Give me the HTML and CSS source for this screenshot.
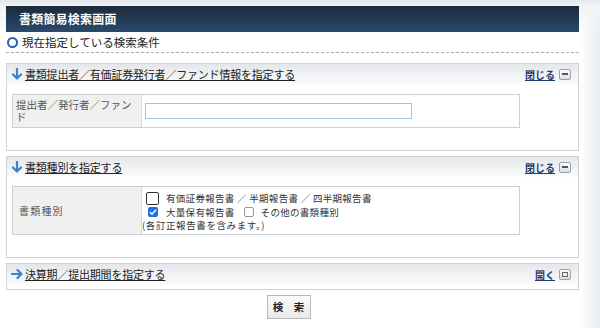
FILE: index.html
```html
<!DOCTYPE html>
<html lang="ja">
<head>
<meta charset="utf-8">
<title>書類簡易検索画面</title>
<link rel="stylesheet" href="styles.css">
</head>
<body>
<div class="page">
  <div class="titlebar">書類簡易検索画面</div>
  <div class="cond"><span class="ring"></span><span>現在指定している検索条件</span></div>

  <div class="box">
    <div class="bhead">
      <a class="hlink" href="#"><svg class="arr" width="12" height="12" viewBox="0 0 12 12"><path d="M6 1v9M2 6.5l4 4 4-4" fill="none" stroke="#3b82d0" stroke-width="2.2" stroke-linecap="round" stroke-linejoin="round"/></svg><span class="ul">書類提出者／有価証券発行者／ファンド情報を指定する</span></a>
      <span class="tog"><a class="tlink" href="#">閉じる</a><span class="tbtn"><span class="minus"></span></span></span>
    </div>
    <div class="bbody">
      <div class="tbl">
        <div class="lab lab1">提出者／発行者／ファンド</div>
        <div class="val val1"><span class="inp"></span></div>
      </div>
    </div>
  </div>

  <div class="box">
    <div class="bhead">
      <a class="hlink" href="#"><svg class="arr" width="12" height="12" viewBox="0 0 12 12"><path d="M6 1v9M2 6.5l4 4 4-4" fill="none" stroke="#3b82d0" stroke-width="2.2" stroke-linecap="round" stroke-linejoin="round"/></svg><span class="ul">書類種別を指定する</span></a>
      <span class="tog"><a class="tlink" href="#">閉じる</a><span class="tbtn"><span class="minus"></span></span></span>
    </div>
    <div class="bbody b2">
      <div class="tbl tbl2">
        <div class="lab lab2">書類種別</div>
        <div class="val val2">
          <div class="crow"><span class="cb big"></span><span class="ct">有価証券報告書 ／ 半期報告書 ／ 四半期報告書</span></div>
          <div class="crow"><span class="cb on"><svg width="10" height="10" viewBox="0 0 10 10"><path d="M2 5.2l2 2 4-4.4" fill="none" stroke="#fff" stroke-width="1.6"/></svg></span><span class="ct">大量保有報告書</span><span class="cb off"></span><span class="ct">その他の書類種別</span></div>
          <div class="note">(各訂正報告書を含みます。)</div>
        </div>
      </div>
    </div>
  </div>

  <div class="box">
    <div class="bhead">
      <a class="hlink" href="#"><svg class="arr" width="12" height="12" viewBox="0 0 12 12"><path d="M1 6h9M6.5 2l4 4-4 4" fill="none" stroke="#3b82d0" stroke-width="2.2" stroke-linecap="round" stroke-linejoin="round"/></svg><span class="ul">決算期／提出期間を指定する</span></a>
      <span class="tog"><a class="tlink" href="#">開く</a><span class="tbtn"><span class="sq"></span></span></span>
    </div>
    <div class="bbody b3"></div>
  </div>

  <div class="btnrow"><span class="btn">検　索</span></div>
</div>
</body>
</html>
```

FILE: styles.css
```css
html, body { height: 100%; }
body {
  margin: 0;
  font-family: "Noto Sans CJK JP", "Noto Sans", sans-serif;
  color: #222;
  background:
    linear-gradient(to bottom, #e3e7ec 0, #f2f4f6 6px, rgba(255,255,255,0) 40px),
    linear-gradient(to right, #ffffff 580px, #e8ecf1 600px);
  background-color: #fff;
}
.page {
  width: 573px;
  padding: 6px 0 0 6px;
}
.titlebar {
  height: 26px;
  line-height: 26px;
  padding-left: 13px;
  color: #fff;
  font-weight: bold;
  font-size: 12px;
  letter-spacing: 0.2px;
  background: linear-gradient(to bottom, #1b2a3c, #2b4a6d);
}
.cond {
  height: 20px;
  display: flex;
  align-items: center;
  gap: 4px;
  padding-left: 1px;
  font-size: 11.5px;
  color: #222;
  border-bottom: 1px dashed #b0b0b0;
  margin-bottom: 10px;
}
.ring {
  width: 7px;
  height: 7px;
  border: 2.5px solid #1f64b8;
  border-radius: 50%;
  background: #fff;
}
.box {
  border: 1px solid #cfd3d7;
  margin-bottom: 5px;
  background: #fff;
}
.bhead {
  height: 20px;
  display: flex;
  align-items: center;
  justify-content: space-between;
  padding: 0 7px 0 4px;
  background: linear-gradient(to bottom, #e4e7ea, #fbfbfc);
}
.hlink {
  display: flex;
  align-items: center;
  gap: 2px;
  color: #222;
  text-decoration: none;
  font-size: 11px;
}
.arr { flex: none; }
.ul {
  text-decoration: underline;
  letter-spacing: -0.2px;
}
.tog {
  display: flex;
  align-items: center;
  gap: 4px;
}
.tlink {
  color: #1d3c6e;
  font-size: 10px;
  font-weight: bold;
  text-decoration: underline;
}
.tbtn {
  width: 10px;
  height: 9px;
  border: 1px solid #9aa0a6;
  border-radius: 2px;
  background: linear-gradient(#fdfdfd, #dcdfe2);
  display: flex;
  align-items: center;
  justify-content: center;
}
.minus {
  width: 6px;
  height: 2px;
  background: #555;
}
.sq {
  width: 4px;
  height: 3px;
  border: 1px solid #666;
}
.bbody {
  padding: 10px 58px 22px 5px;
}
.bbody.b2 { padding-top: 9px; padding-bottom: 22px; }
.bbody.b3 { padding: 0; height: 5px; }
.tbl {
  display: flex;
  border: 1px solid #cdd0d3;
}
.lab {
  width: 125px;
  flex: none;
  background: #f0f0f0;
  border-right: 1px solid #d8d8d8;
  color: #555;
  padding: 4px 0 4px 3px;
  font-size: 10.5px;
  line-height: 12px;
}
.lab2 {
  display: flex;
  align-items: center;
  padding-left: 6px;
  width: 122px;
  font-size: 10px;
  letter-spacing: 1.2px;
}
.val {
  flex: 1;
  padding-left: 3px;
}
.val1 {
  display: flex;
  align-items: center;
}
.inp {
  width: 265px;
  height: 14px;
  border: 1px solid #9fc6dc;
  background: #fff;
}
.val2 {
  padding: 4px 0 3px 4px;
  font-size: 9.5px;
  color: #333;
}
.crow {
  display: flex;
  align-items: center;
  height: 14px;
}
.ct {
  letter-spacing: 0.3px;
}
.cb {
  flex: none;
  box-sizing: border-box;
  display: inline-flex;
  align-items: center;
  justify-content: center;
}
.cb.big {
  width: 13px;
  height: 13px;
  border: 1.5px solid #333;
  border-radius: 2px;
  margin: 0 7px 0 0;
}
.cb.on {
  width: 10px;
  height: 10px;
  background: #1a73e8;
  border-radius: 2px;
  margin: 0 8px 0 2px;
}
.cb.off {
  width: 10px;
  height: 10px;
  border: 1px solid #999;
  border-radius: 2px;
  margin: 0 7px 0 9px;
}
.note {
  letter-spacing: 0.6px;
  margin-left: -4px;
  line-height: 12px;
}
.btnrow {
  display: flex;
  justify-content: center;
  margin-top: 1px;
}
.btn {
  width: 42px;
  height: 22px;
  line-height: 22px;
  text-align: center;
  border: 1px solid #b8b8b8;
  background: linear-gradient(#fbfbfb, #e9e9e9);
  font-weight: bold;
  font-size: 10.5px;
  color: #222;
  margin-right: 8px;
}
```
